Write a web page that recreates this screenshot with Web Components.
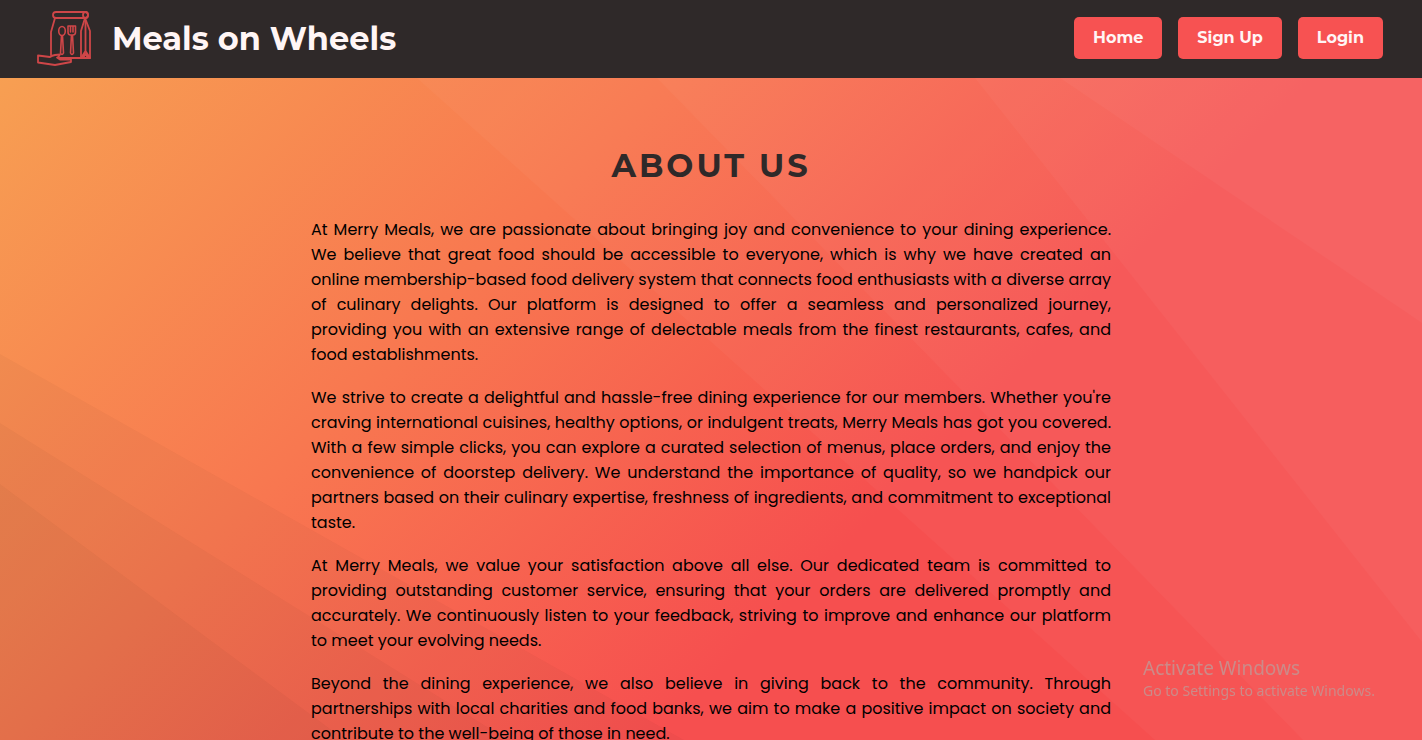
<!DOCTYPE html>
<html lang="en">
<head>
<meta charset="utf-8">
<meta name="viewport" content="width=device-width, initial-scale=1">
<title>Meals on Wheels</title>
<style>
  html, body { margin: 0; height: 100%; }
  body { font-family: Poppins, Inter, sans-serif; font-size: 16px; color: #000; }
</style>
</head>
<body>
<mow-page>
  <mow-header slot="header" name="Meals on Wheels">
    <mow-nav-link href="#home">Home</mow-nav-link>
    <mow-nav-link href="#signup">Sign Up</mow-nav-link>
    <mow-nav-link href="#login">Login</mow-nav-link>
  </mow-header>
  <mow-article heading="About Us">
    <mow-paragraph>At Merry Meals, we are passionate about bringing joy and convenience to your dining experience. We believe that great food should be accessible to everyone, which is why we have created an online membership-based food delivery system that connects food enthusiasts with a diverse array of culinary delights. Our platform is designed to offer a seamless and personalized journey, providing you with an extensive range of delectable meals from the finest restaurants, cafes, and food establishments.</mow-paragraph>
    <mow-paragraph>We strive to create a delightful and hassle-free dining experience for our members. Whether you're craving international cuisines, healthy options, or indulgent treats, Merry Meals has got you covered. With a few simple clicks, you can explore a curated selection of menus, place orders, and enjoy the convenience of doorstep delivery. We understand the importance of quality, so we handpick our partners based on their culinary expertise, freshness of ingredients, and commitment to exceptional taste.</mow-paragraph>
    <mow-paragraph>At Merry Meals, we value your satisfaction above all else. Our dedicated team is committed to providing outstanding customer service, ensuring that your orders are delivered promptly and accurately. We continuously listen to your feedback, striving to improve and enhance our platform to meet your evolving needs.</mow-paragraph>
    <mow-paragraph>Beyond the dining experience, we also believe in giving back to the community. Through partnerships with local charities and food banks, we aim to make a positive impact on society and contribute to the well-being of those in need.</mow-paragraph>
  </mow-article>
</mow-page>
<os-watermark heading="Activate Windows">Go to Settings to activate Windows.</os-watermark>

<script>
const define = (name, html, setup) => {
  const template = document.createElement('template');
  template.innerHTML = html;
  customElements.define(name, class extends HTMLElement {
    constructor() {
      super();
      this.attachShadow({ mode: 'open' }).append(template.content.cloneNode(true));
    }
    connectedCallback() { if (setup) setup(this, this.shadowRoot); }
  });
};

define('mow-logo', `
  <style>
    :host { display: block; width: 56px; height: 60px; flex: none; }
    svg { display: block; width: 100%; height: 100%; }
  </style>
  <svg viewBox="0 0 56 60" fill="none" stroke="#cf4648" stroke-width="1.8" stroke-linejoin="round" stroke-linecap="round" aria-hidden="true">
    <rect x="16" y="3" width="35" height="6" rx="3"/>
    <ellipse cx="48.500" cy="6" rx="2.500" ry="3"/>
    <path d="M18 9 L14 23 V46"/>
    <path d="M48 9 L44 22 V49 M48 9 L53 22 V49 H22"/>
    <path d="M48.500 12 V42 M44 49 L48.500 42 L53 49 M46 49 L48.500 45 L51 49"/>
    <g stroke-width="1.600">
      <ellipse cx="25" cy="22" rx="3.300" ry="4.500"/>
      <path d="M24.500 27 L23.500 44 Q25 47 26.500 44 L25.500 27"/>
      <path d="M31 17 V23 Q31 26 33.500 26 H36 Q38.500 26 38.500 23 V17 M33.500 17 V23 M36 17 V23 M31 17 H38.500 M34.500 26 L33.500 44 Q35 47 36.500 44 L35.500 26"/>
    </g>
    <path d="M1 46.500 L13 48 Q15 46.500 18 46 L23 45.500 Q22 48 20 48.500 L23 50.500 H34 V53 L18 56 L1 53.500 Z"/>
  </svg>`);

define('mow-header', `
  <style>
    :host { display: block; background: #2f2929; }
    header { display: flex; align-items: center; justify-content: space-between; height: 78px; padding: 0 39px 0 37px; box-sizing: border-box; }
    .brand { display: flex; align-items: center; gap: 19px; color: #fff5f5; text-decoration: none; font: 700 32px/40px Montserrat, Inter, sans-serif; }
    nav { display: flex; gap: 16px; padding-bottom: 2px; }
  </style>
  <header>
    <a class="brand" href="#home"><mow-logo></mow-logo><span></span></a>
    <nav aria-label="Main"><slot></slot></nav>
  </header>`,
  (host, root) => { root.querySelector('span').textContent = host.getAttribute('name'); });

define('mow-nav-link', `
  <style>
    :host { display: block; }
    a { display: block; padding: 11px 19px; border-radius: 5px; background: #f75252; color: #fff5f5; text-decoration: none; font: 700 16px/20px Montserrat, Inter, sans-serif; }
  </style>
  <a><slot></slot></a>`,
  (host, root) => { root.querySelector('a').href = host.getAttribute('href'); });

define('mow-backdrop', `
  <style>
    :host { display: block; position: absolute; inset: 0; background: linear-gradient(135deg, #f79f52 0%, #f87850 32%, #f64f4f 63%); }
    svg { display: block; width: 100%; height: 100%; }
  </style>
  <svg viewBox="0 0 1422 662" preserveAspectRatio="none" aria-hidden="true">
    <g fill="#fff" fill-opacity=".03">
      <path d="M417 0 L1155 662 H1422 V0 Z"/>
      <path d="M657 0 L1303 662 H1422 V0 Z"/>
      <path d="M975 0 L1422 564 V0 Z"/>
      <path d="M1060 0 L1422 245 V0 Z"/>
    </g>
    <g fill="#222" fill-opacity=".03">
      <path d="M0 276 L684 662 H0 Z"/>
      <path d="M0 345 L508 662 H0 Z"/>
      <path d="M0 406 L345 662 H0 Z"/>
    </g>
  </svg>`);

define('mow-page', `
  <style>
    :host { display: flex; flex-direction: column; height: 100vh; }
    main { position: relative; flex: 1; min-height: 0; }
    .scroll { position: relative; height: 100%; overflow: auto; scrollbar-width: none; }
  </style>
  <slot name="header"></slot>
  <main><mow-backdrop></mow-backdrop><div class="scroll"><slot></slot></div></main>`);

define('mow-article', `
  <style>
    :host { display: block; max-width: 800px; margin: 0 auto; padding: 68px 20px; }
    h1 { margin: 0 0 31px; color: #2f2929; text-align: center; text-transform: uppercase; letter-spacing: 3px; font: 700 32px/40px Montserrat, Inter, sans-serif; }
    .copy { display: flex; flex-direction: column; gap: 18px; }
  </style>
  <h1></h1>
  <div class="copy"><slot></slot></div>`,
  (host, root) => { root.querySelector('h1').textContent = host.getAttribute('heading'); });

define('mow-paragraph', `
  <style>
    :host { display: block; }
    p { margin: 0; line-height: 25px; text-align: justify; }
  </style>
  <p><slot></slot></p>`);

define('os-watermark', `
  <style>
    :host { display: block; position: fixed; right: 43px; bottom: 38px; width: 236px; color: #cb8b89; font-family: "Segoe UI", "Noto Sans", sans-serif; white-space: nowrap; pointer-events: none; }
    div { font-size: 19px; line-height: 24px; }
    p { margin: 0; font-size: 14px; line-height: 22px; }
  </style>
  <div></div>
  <p><slot></slot></p>`,
  (host, root) => { root.querySelector('div').textContent = host.getAttribute('heading'); });
</script>
</body>
</html>
